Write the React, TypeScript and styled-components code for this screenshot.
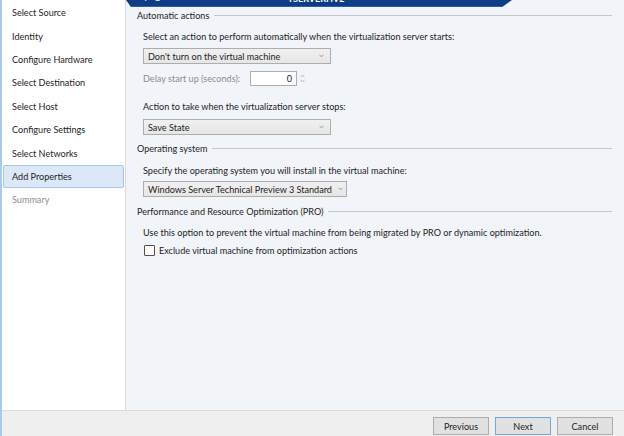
import React from "react";
import styled, { createGlobalStyle } from "styled-components";

const GlobalStyle = createGlobalStyle`
  html, body { margin: 0; padding: 0; background: #ffffff; }
  body { font-family: "Lato", "Noto Sans", sans-serif; font-size: 9.1px; color: #1e1e1e; }
  * { box-sizing: border-box; }
`;

const Window = styled.div`
  width: 624px;
  height: 436px;
  display: grid;
  grid-template-rows: 1fr 26px;
  border-left: 2px solid #a9c9ee;
  overflow: hidden;
`;

const Main = styled.div`
  display: flex;
  min-height: 0;
`;

const Nav = styled.nav`
  width: 124px;
  background: #ffffff;
  border-right: 1px solid #d9d9d9;
  padding: 1px 1px 0 1px;
  display: flex;
  flex-direction: column;
`;

const NavItem = styled.div<{ $active?: boolean; $disabled?: boolean }>`
  height: 23.4px;
  display: flex;
  align-items: center;
  padding-left: ${(p) => (p.$active ? 8 : 9)}px;
  color: ${(p) => (p.$disabled ? "#8e8e8e" : "#1e1e1e")};
  background: ${(p) => (p.$active ? "#dce8f8" : "transparent")};
  border: ${(p) => (p.$active ? "1px solid #a8c5ea" : "none")};
  border-radius: 2px;
  white-space: nowrap;
`;

const Content = styled.section`
  flex: 1;
  background: #f1f4f8;
  display: flex;
  flex-direction: column;
  min-width: 0;
`;

const Banner = styled.div`
  width: 386px;
  height: 7px;
  background: #0e3d86;
  border-bottom: 1px solid #2c5ea8;
  clip-path: polygon(0 0, 100% 0, calc(100% - 10px) 100%, 5px 100%);
  display: flex;
  align-items: flex-end;
  overflow: hidden;
  color: #ffffff;
  font-size: 9px;
  font-weight: 700;
  line-height: 9px;
  padding-right: 40px;
`;

const BannerText = styled.span<{ $grow?: boolean }>`
  margin-bottom: 3px;
  padding-left: ${(p) => (p.$grow ? 0 : 17)}px;
  flex: ${(p) => (p.$grow ? 1 : "none")};
  text-align: ${(p) => (p.$grow ? "center" : "left")};
`;

const Body = styled.div`
  padding: 0 12px 0 11px;
  display: flex;
  flex-direction: column;
`;

const GroupHeading = styled.div<{ $mt: number }>`
  margin-top: ${(p) => p.$mt}px;
  height: 12px;
  display: flex;
  align-items: center;
  gap: 5px;
  white-space: nowrap;
  &::after {
    content: "";
    flex: 1;
    height: 1px;
    background: #c6c8cb;
  }
`;

const Indent = styled.div`
  padding-left: 6px;
  display: flex;
  flex-direction: column;
`;

const Label = styled.div<{ $mt: number }>`
  margin-top: ${(p) => p.$mt}px;
  height: 12px;
  line-height: 12px;
  white-space: nowrap;
`;

const Select = styled.div<{ $mt: number; $w: number }>`
  margin-top: ${(p) => p.$mt}px;
  width: ${(p) => p.$w}px;
  height: 16px;
  border: 1px solid #adadad;
  background: linear-gradient(#f0f0f0, #e6e6e6);
  display: flex;
  align-items: center;
  justify-content: space-between;
  gap: 6px;
  padding: 0 6px 0 4px;
  white-space: nowrap;
`;

const Chevron = styled.svg`
  width: 5px;
  height: 4px;
  flex: none;
`;

const Row = styled.div<{ $mt: number }>`
  margin-top: ${(p) => p.$mt}px;
  display: flex;
  align-items: center;
  height: 15px;
`;

const DelayLabel = styled.div`
  width: 107px;
  color: #8d8d8d;
  white-space: nowrap;
`;

const NumberBox = styled.div`
  width: 47px;
  height: 15px;
  border: 1px solid #acadb1;
  background: #ffffff;
  display: flex;
  align-items: center;
  justify-content: flex-end;
  padding-right: 4px;
`;

const Spinner = styled.svg`
  width: 5px;
  height: 9px;
  margin-left: 3px;
`;

const CheckRow = styled.label<{ $mt: number }>`
  margin-top: ${(p) => p.$mt}px;
  display: flex;
  align-items: center;
  gap: 4px;
  height: 12px;
  white-space: nowrap;
`;

const CheckBox = styled.span`
  width: 11px;
  height: 11px;
  margin-left: 1px;
  border: 1px solid #4f4f4f;
  background: #ffffff;
  border-radius: 1px;
`;

const Footer = styled.footer`
  background: #efefef;
  border-top: 1px solid #dcdcdc;
  display: flex;
  justify-content: flex-end;
  align-items: flex-start;
  gap: 6px;
  padding: 6px 11px 0 0;
`;

const Button = styled.button<{ $primary?: boolean }>`
  width: 56px;
  height: 18px;
  padding: 0;
  font: inherit;
  color: #1e1e1e;
  background: #e1e1e1;
  border: 1px solid ${(p) => (p.$primary ? "#6fa8e0" : "#adadad")};
`;

const ChevronIcon = () => (
  <Chevron viewBox="0 0 5 4">
    <path d="M0.5 0.8 L2.5 2.8 L4.5 0.8" fill="none" stroke="#8a8a8a" strokeWidth="0.9" />
  </Chevron>
);

const navItems = [
  "Select Source",
  "Identity",
  "Configure Hardware",
  "Select Destination",
  "Select Host",
  "Configure Settings",
  "Select Networks",
  "Add Properties",
  "Summary",
];

export default function App() {
  return (
    <>
      <GlobalStyle />
      <Window>
        <Main>
          <Nav>
            {navItems.map((n) => (
              <NavItem key={n} $active={n === "Add Properties"} $disabled={n === "Summary"}>
                {n}
              </NavItem>
            ))}
          </Nav>
          <Content>
            <Banner>
              <BannerText>+ &nbsp; ≡</BannerText>
              <BannerText $grow>TSERVERHV2</BannerText>
            </Banner>
            <Body>
              <GroupHeading $mt={2}>Automatic actions</GroupHeading>
              <Indent>
                <Label $mt={10}>Select an action to perform automatically when the virtualization server starts:</Label>
                <Select $mt={5} $w={188}>
                  Don't turn on the virtual machine
                  <ChevronIcon />
                </Select>
                <Row $mt={7}>
                  <DelayLabel>Delay start up (seconds):</DelayLabel>
                  <NumberBox>0</NumberBox>
                  <Spinner viewBox="0 0 5 9">
                    <path d="M0.5 3.2 L2.5 1 L4.5 3.2" fill="none" stroke="#a5a5a5" strokeWidth="0.8" />
                    <path d="M0.5 5.8 L2.5 8 L4.5 5.8" fill="none" stroke="#a5a5a5" strokeWidth="0.8" />
                  </Spinner>
                </Row>
                <Label $mt={15}>Action to take when the virtualization server stops:</Label>
                <Select $mt={6} $w={188}>
                  Save State
                  <ChevronIcon />
                </Select>
              </Indent>
              <GroupHeading $mt={7}>Operating system</GroupHeading>
              <Indent>
                <Label $mt={11}>Specify the operating system you will install in the virtual machine:</Label>
                <Select $mt={4} $w={204}>
                  Windows Server Technical Preview 3 Standard
                  <ChevronIcon />
                </Select>
              </Indent>
              <GroupHeading $mt={8}>Performance and Resource Optimization (PRO)</GroupHeading>
              <Indent>
                <Label $mt={10}>Use this option to prevent the virtual machine from being migrated by PRO or dynamic optimization.</Label>
                <CheckRow $mt={5}>
                  <CheckBox />
                  Exclude virtual machine from optimization actions
                </CheckRow>
              </Indent>
            </Body>
          </Content>
        </Main>
        <Footer>
          <Button>Previous</Button>
          <Button $primary>Next</Button>
          <Button>Cancel</Button>
        </Footer>
      </Window>
    </>
  );
}
